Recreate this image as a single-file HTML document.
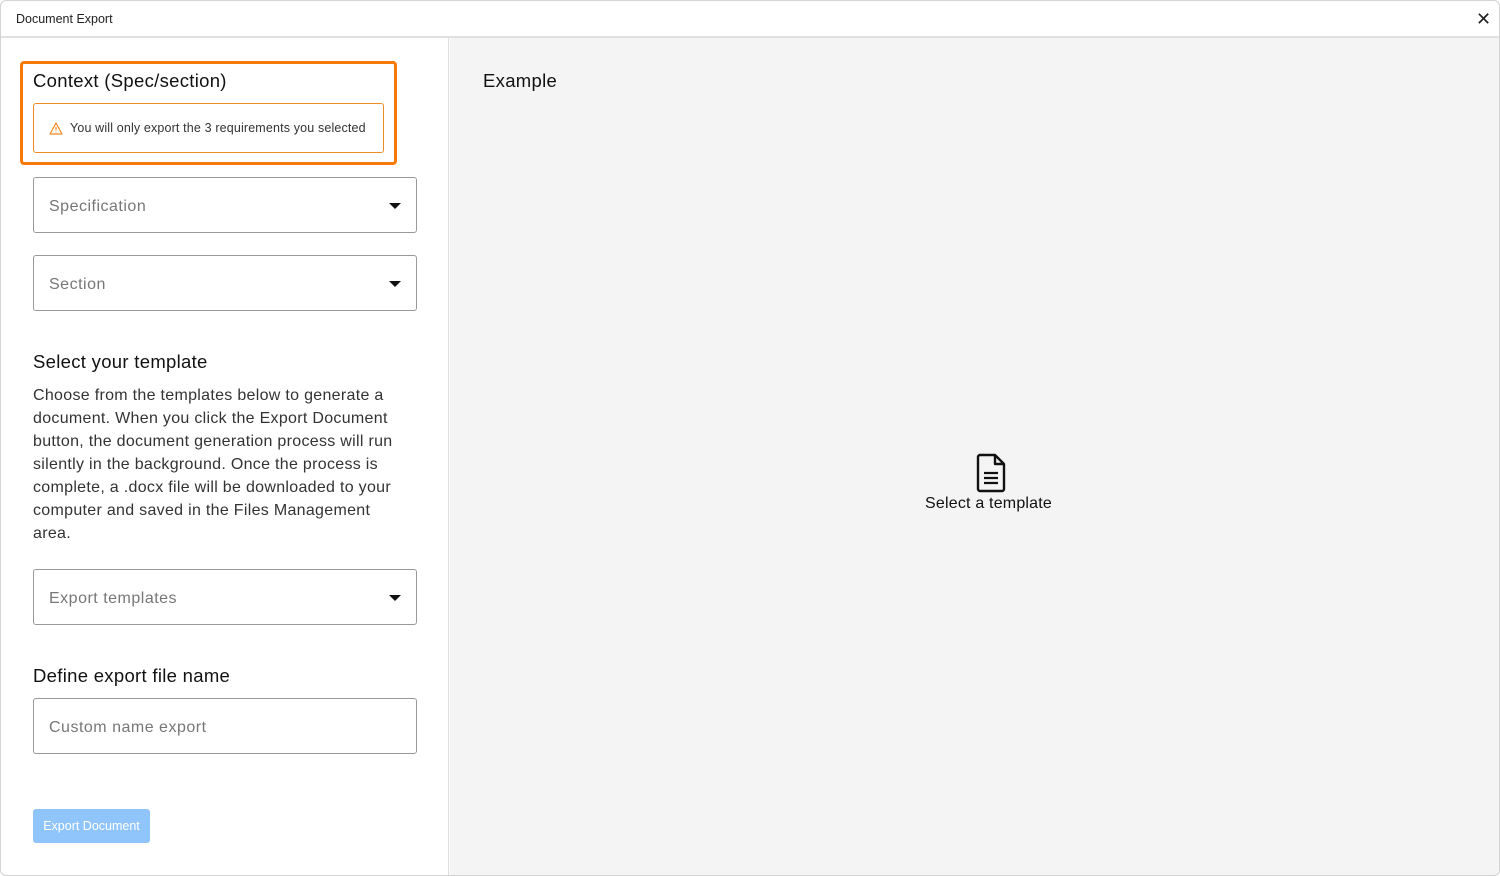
<!DOCTYPE html>
<html><head><style>
*{box-sizing:border-box;margin:0;padding:0}
body{width:1500px;height:876px;background:#fff;font-family:"Liberation Sans",sans-serif;color:#111;position:relative;overflow:hidden}
.frame{position:absolute;left:0;top:0;width:1500px;height:876px;border:1px solid #d4d4d4;border-radius:6px}
.hdr{position:absolute;left:0;top:0;width:1500px;height:38px;border-bottom:2px solid #e0e0e0}
.hdr span{position:absolute;left:16px;top:12px;font-size:12.5px;color:#222}
.close{position:absolute;left:1476px;top:9px;font-size:18px;color:#222}
.left{position:absolute;left:1px;top:38px;width:448px;height:837px;background:#fff;border-right:1px solid #ddd}
.right{position:absolute;left:450px;top:38px;width:1049px;height:837px;background:#f4f4f4}
.abs{position:absolute}
.ob{left:20px;top:61px;width:377px;height:104px;border:3px solid #f77a08;border-radius:4px}
.warn{left:33px;top:103px;width:351px;height:50px;border:1px solid #f08a24;border-radius:3px;font-size:12.5px;color:#333;letter-spacing:.15px}
.sel{left:33px;width:384px;height:56px;border:1px solid #999;border-radius:3px;font-size:16px;color:#777;padding:20px 15px;letter-spacing:.5px}
.dd:after{content:"";position:absolute;right:15px;top:25px;border-left:6px solid transparent;border-right:6px solid transparent;border-top:6px solid #111}
h3{font-weight:normal;font-size:18.5px;position:absolute;left:33px;letter-spacing:.3px}
p.d{position:absolute;left:33px;top:384px;width:380px;font-size:16px;line-height:23px;color:#333;letter-spacing:.3px}
.btn{left:33px;top:809px;width:117px;height:34px;background:#90c5fb;color:#fff;font-size:12.5px;border-radius:3px;text-align:center;line-height:34px}
</style></head><body>
<div class="left"></div><div class="right"></div>
<div class="hdr"><span>Document Export</span><div class="close">✕</div></div>
<div class="frame"></div>
<div class="abs ob"></div>
<h3 style="top:70px">Context (Spec/section)</h3>
<div class="abs warn"><svg class="abs" style="left:15px;top:18px" width="14" height="13" viewBox="0 0 14 13"><path d="M7 1L13 12H1Z" fill="none" stroke="#f08a24" stroke-width="1.2" stroke-linejoin="round"/><path d="M7 5v3.5M7 10v.5" stroke="#f08a24" stroke-width="1.2"/></svg><span class="abs" style="left:36px;top:17px">You will only export the 3 requirements you selected</span></div>
<div class="abs sel dd" style="top:177px">Specification</div>
<div class="abs sel dd" style="top:255px">Section</div>
<h3 style="top:351px">Select your template</h3>
<p class="d">Choose from the templates below to generate a document. When you click the Export Document button, the document generation process will run silently in the background. Once the process is complete, a .docx file will be downloaded to your computer and saved in the Files Management<br>area.</p>
<div class="abs sel dd" style="top:569px">Export templates</div>
<h3 style="top:665px">Define export file name</h3>
<div class="abs sel" style="top:698px">Custom name export</div>
<div class="abs btn">Export Document</div>
<h3 style="left:483px;top:70px">Example</h3>
<svg class="abs" style="left:975px;top:453px" width="32" height="40" viewBox="0 0 32 40"><path d="M5 2h15l9 9v25a2 2 0 0 1-2 2H5a2 2 0 0 1-2-2V4a2 2 0 0 1 2-2z" fill="none" stroke="#111" stroke-width="2.4" stroke-linejoin="round"/><path d="M20 2v9h9" fill="none" stroke="#111" stroke-width="2.4" stroke-linejoin="round"/><path d="M9 20h14M9 25h14M9 30h14" stroke="#111" stroke-width="2.2"/></svg>
<div class="abs" style="left:925px;top:495px;font-size:16px;letter-spacing:.2px">Select a template</div>
</body></html>
